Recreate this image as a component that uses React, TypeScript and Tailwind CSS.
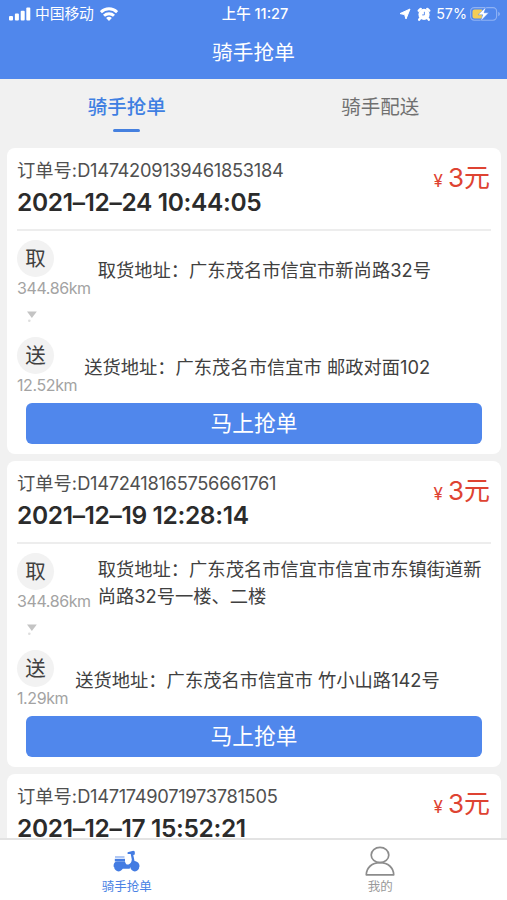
import { useState } from 'react';

type Place = { km: string; address: string };

type Order = {
  id: string;
  time: string;
  price: string;
  pickup?: Place;
  deliver?: Place;
};

const ORDERS: Order[] = [
  {
    id: 'D1474209139461853184',
    time: '2021–12–24 10:44:05',
    price: '3元',
    pickup: { km: '344.86km', address: '广东茂名市信宜市新尚路32号' },
    deliver: { km: '12.52km', address: '广东茂名市信宜市 邮政对面102' },
  },
  {
    id: 'D1472418165756661761',
    time: '2021–12–19 12:28:14',
    price: '3元',
    pickup: { km: '344.86km', address: '广东茂名市信宜市信宜市东镇街道新尚路32号一楼、二楼' },
    deliver: { km: '1.29km', address: '广东茂名市信宜市 竹小山路142号' },
  },
  {
    id: 'D1471749071973781505',
    time: '2021–12–17 15:52:21',
    price: '3元',
  },
];

const TABS = ['骑手抢单', '骑手配送'];

function StatusBar() {
  return (
    <div className="grid h-7 grid-cols-[1fr_auto_1fr] items-center pl-[9px] pr-[6px] text-[14px] leading-7">
      <div className="flex items-center">
        <svg viewBox="0 0 22 14" className="h-[14px] w-[22px]" fill="currentColor">
          <rect x="0" y="9" width="4" height="4.5" rx="1" />
          <rect x="5.9" y="6.5" width="4" height="7" rx="1" />
          <rect x="11.7" y="3.7" width="4" height="9.8" rx="1" />
          <rect x="17.3" y="0.5" width="4" height="13" rx="1" />
        </svg>
        <span className="ml-1 text-[14.8px] tracking-[-0.1px]">中国移动</span>
        <svg viewBox="0 0 18 14" className="ml-[6px] h-[14px] w-[18px]" fill="none" stroke="currentColor" strokeWidth="2.9">
          <path d="M.9 5.1a11.6 11.6 0 0 1 16.2 0" />
          <path d="M4 8.8a7.2 7.2 0 0 1 10 0" />
          <path d="M9 14 6.1 11.1a4.1 4.1 0 0 1 5.8 0z" fill="currentColor" stroke="none" />
        </svg>
      </div>
      <span className="text-[14.5px] font-medium">上午 11:27</span>
      <div className="flex items-center justify-end">
        <svg viewBox="0 0 12 12" className="h-[12px] w-[12px]" fill="currentColor">
          <path d="M11 1 7 11 5.6 6.6 1 5.6z" stroke="currentColor" strokeWidth="1" strokeLinejoin="round" />
        </svg>
        <svg viewBox="0 0 14 14" className="ml-[6px] h-[14px] w-[14px]">
          <path d="M1.8 3.7 3.7 1.9M12.2 3.7l-1.9-1.8M3 11.5l-.8 1.2M11 11.5l.8 1.2" stroke="currentColor" strokeWidth="2.4" strokeLinecap="round" />
          <circle cx="7" cy="7.4" r="5.6" fill="currentColor" />
          <path d="M7.4 4.8v3.1H5.2" fill="none" stroke="#5087ec" strokeWidth="0.9" />
        </svg>
        <span className="ml-[5px] text-[14.3px]">57%</span>
        <svg viewBox="0 0 31 16" className="ml-[3px] h-4 w-[31px]">
          <rect x="0.6" y="1.6" width="26" height="12.6" rx="3.6" fill="none" stroke="#8fb2f4" strokeWidth="1.1" />
          <path d="M28.4 5.8v4.4c1.8-.8 1.8-3.6 0-4.4z" fill="#a4c1f6" />
          <path d="M4.5 3.5H12v9H4.500a2 2 0 0 1-2-2v-5a2 2 0 0 1 2-2z" fill="#f3cd55" />
          <path d="m16 1-8 7.800h4.700L10.700 15l8-8.200H14z" fill="#fff" stroke="#5087ec" strokeWidth="0.5" />
        </svg>
      </div>
    </div>
  );
}

function Stop({ mark, label, stop }: { mark: string; label: string; stop: Place }) {
  return (
    <div className="flex h-[59px] items-center">
      <div className="shrink-0">
        <div className="flex h-[37px] w-[37px] items-center justify-center rounded-full bg-[#f2f2f2] pt-[2px] text-[20.5px] leading-none text-[#404040]">
          {mark}
        </div>
        <div className="h-[22px] text-[16px] leading-[23px] tracking-[-0.4px] text-[#a3a3a3]">{stop.km}</div>
      </div>
      <p className="ml-[7px] pt-px text-[18.3px] leading-[27px] text-[#404040]">
        {label}：{stop.address}
      </p>
    </div>
  );
}

function OrderCard({ order }: { order: Order }) {
  return (
    <article className="h-[306px] shrink-0 rounded-[8px] bg-white px-[10px]">
      <div className="flex h-[83px] justify-between border-b-2 border-[#ededed]">
        <div className="pt-[9px]">
          <div className="text-[18.3px] leading-[27px] text-[#505050]">
            订单号:<span className="tracking-[-0.31px]">{order.id}</span>
          </div>
          <div className="mt-px text-[24.5px] font-semibold leading-[35px] tracking-[-0.35px] text-[#2b2b2b]">{order.time}</div>
        </div>
        <div className="flex h-[36px] items-baseline pr-[1px] pt-[12px] text-[#de4332]">
          <span className="mr-[5px] text-[17px] leading-[36px]">¥</span>
          <span className="text-[26px] leading-[36px]">{order.price}</span>
        </div>
      </div>

      {order.pickup && order.deliver && (
        <>
          <div className="pt-[9px]">
            <Stop mark="取" label="取货地址" stop={order.pickup} />
            {/* Arrow between the two stops */}
            <div className="h-[38px] pl-[9px] pt-[11px]">
              <svg viewBox="0 0 12 14" className="h-[14px] w-3" fill="#c4c4c4">
                <path d="M1 1.5h9.8L5.900 8z" />
                <circle cx="3.3" cy="10.8" r="1.3" fill="#dedede" />
              </svg>
            </div>
            <Stop mark="送" label="送货地址" stop={order.deliver} />
          </div>

          <button className="ml-[9px] mt-[7px] block h-[41px] w-[456px] rounded-[6px] bg-[#5087ec] text-[21.7px] leading-[41px] text-white">
            马上抢单
          </button>
        </>
      )}
    </article>
  );
}

function ScooterIcon() {
  return (
    <svg viewBox="0 0 27 22" className="h-[22px] w-[27px]" fill="#447ce2">
      <path d="M2 6.4h9.5v1.2H2z" opacity="0.7" />
      <path d="M1.8 8.8H12v2.700H1.8z" />
      <path d="M14.6 2.300 20.300.8l1.500.7v3l-1.500.6 1.2 5.900c3.400.4 5.200 2.700 5 5.700H18l-1.500 2H9L.8 17c-.6-3 .7-5.400 3.200-5.600h8c.5 2.500 1.800 3.600 3.500 3 1.900-.7 3.200-2.400 3.300-5L17.700 4l-3.100.1z" />
      <circle cx="5.600" cy="17" r="4.400" />
      <circle cx="21.800" cy="17" r="4.400" />
    </svg>
  );
}

function UserIcon() {
  return (
    <svg viewBox="0 0 30 30" className="h-[30px] w-[30px]" fill="none" stroke="#8c8c8c" strokeWidth="1.7">
      <ellipse cx="15" cy="9" rx="8.8" ry="7.7" />
      <path d="M1.3 28.800C1.5 21.500 7 16.700 15 16.700S28.500 21.500 28.700 28.800z" strokeLinejoin="round" />
    </svg>
  );
}

export default function App() {
  const [tab, setTab] = useState(0);

  return (
    <div className="flex h-[900px] w-[507px] flex-col overflow-hidden bg-[#f1f1f1] font-['Inter','Noto_Sans_CJK_SC',sans-serif]">
      <header className="h-[79px] shrink-0 bg-[#5087ec] text-white">
        <StatusBar />
        <h1 className="text-center text-[20.7px] leading-[50px]">骑手抢单</h1>
      </header>

      <nav className="grid h-[69px] shrink-0 grid-cols-2">
        {TABS.map((name, i) => (
          <button
            key={name}
            onClick={() => setTab(i)}
            className={`flex flex-col items-center pt-[13px] text-[19.5px] leading-[30px] ${tab === i ? 'font-medium text-[#3f7fe2]' : 'text-[#707070]'}`}
          >
            {name}
            {tab === i && <span className="mt-[7px] h-[3px] w-[27px] rounded-full bg-[#4580df]" />}
          </button>
        ))}
      </nav>

      <main className="flex min-h-0 flex-1 flex-col gap-[7px] overflow-hidden pl-[7px] pr-[6px]">
        {ORDERS.map((order) => (
          <OrderCard key={order.id} order={order} />
        ))}
      </main>

      <footer className="grid h-[62px] shrink-0 grid-cols-2 border-t-2 border-[#e3e3e3] bg-white text-[12.5px]">
        <div className="flex flex-col items-center pt-[10px] text-[#4a82e4]">
          <ScooterIcon />
          <span className="mt-[7px] leading-4">骑手抢单</span>
        </div>
        <div className="flex flex-col items-center pt-[6px] text-[#999]">
          <UserIcon />
          <span className="mt-[3px] leading-4">我的</span>
        </div>
      </footer>
    </div>
  );
}
